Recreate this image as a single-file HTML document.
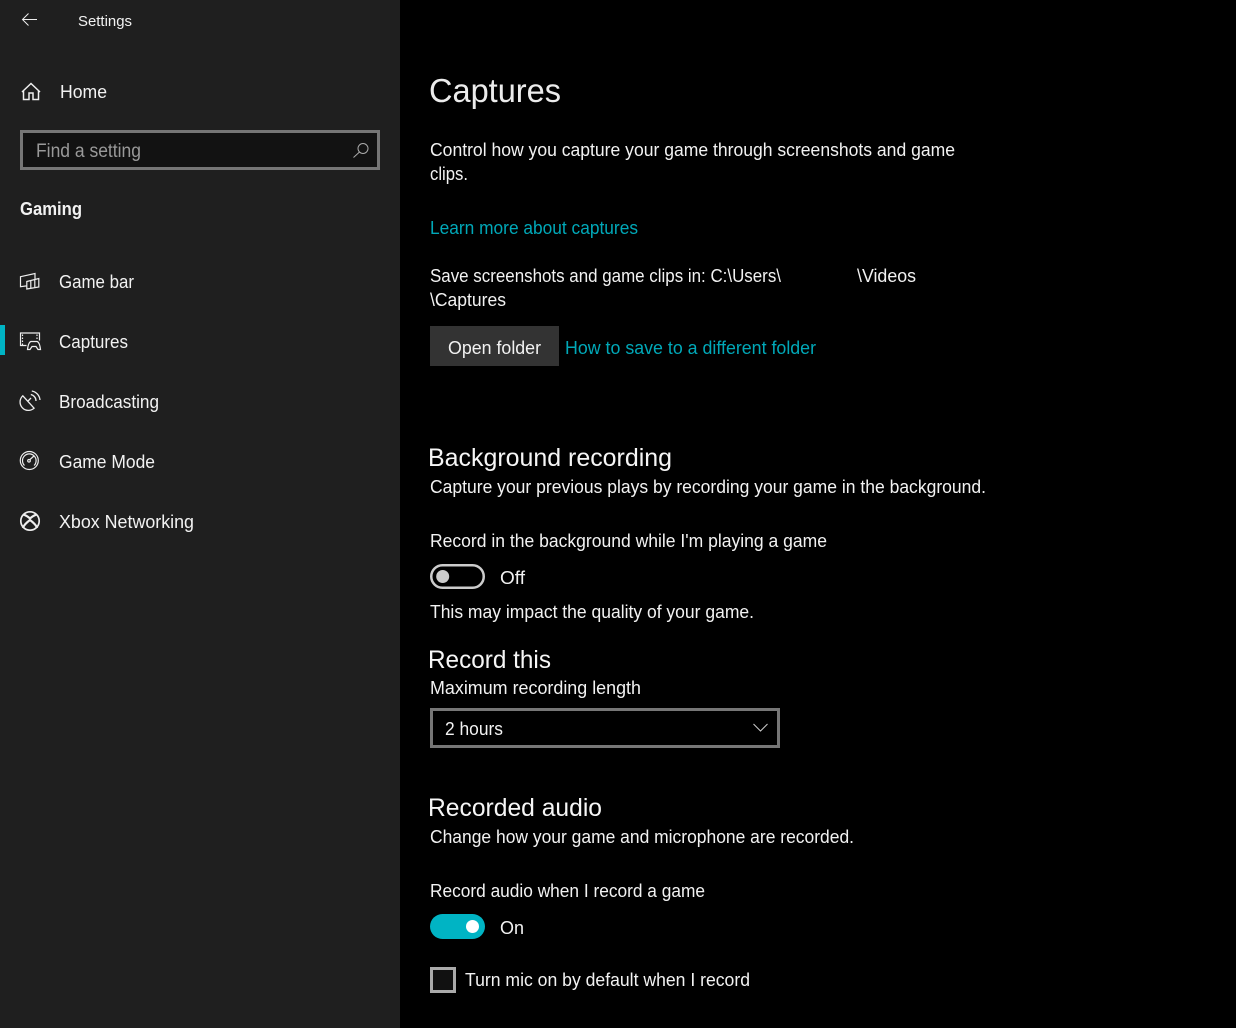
<!DOCTYPE html>
<html>
<head>
<meta charset="utf-8">
<title>Settings</title>
<style>
html,body{margin:0;padding:0;width:1236px;height:1028px;overflow:hidden;background:#000}
svg{display:block;position:absolute;left:0;top:0}
text{font-family:"Liberation Sans",sans-serif;font-size:18px;fill:#f2f2f2}
.l{fill:#00a8b8}
.h{font-size:25px;fill:#f6f6f6}
.i{fill:none;stroke:#eee;stroke-width:1.2}
</style>
</head>
<body>
<svg width="1236" height="1028" viewBox="0 0 1236 1028" xmlns="http://www.w3.org/2000/svg">
<rect x="0" y="0" width="400" height="1028" fill="#1f1f1f"/>
<path class="i" style="stroke-width:1" d="M37 19.500H22.500M28.500 13.500l-6 6 6 6"/>
<text x="78" y="26" textLength="54" lengthAdjust="spacingAndGlyphs" style="font-size:15px">Settings</text>
<path class="i" style="stroke-width:1.500" d="M22 92l9-8.500 9 8.500M23.500 90.500v9h5.500v-6.500h4v6.500h5.500v-9"/>
<text x="60" y="98" textLength="47" lengthAdjust="spacingAndGlyphs">Home</text>
<rect x="21.500" y="131.500" width="357" height="37" fill="#121212" stroke="#767676" stroke-width="3"/>
<text x="36" y="157" textLength="105" lengthAdjust="spacingAndGlyphs" style="fill:#999;font-size:19px">Find a setting</text>
<circle cx="363" cy="148.500" r="5" class="i" style="stroke:#aaa;stroke-width:1"/>
<path class="i" style="stroke:#aaa;stroke-width:1" d="M359.500 152l-6 5.500"/>
<text x="20" y="215" textLength="62" lengthAdjust="spacingAndGlyphs" style="font-weight:bold;font-size:18px">Gaming</text>
<rect x="0" y="325" width="5" height="30" fill="#00b4c4"/>
<path class="i" d="M35 279v-5.500l-14.500 3.200v10l6 -.8M26.800 281.500l12-3v8.500l-12 2zM30.800 280.500v8M34.800 279.500v8"/>
<text x="59" y="288" textLength="75" lengthAdjust="spacingAndGlyphs">Game bar</text>
<path class="i" d="M26.500 345.500h-6v-12.500h19v7.500M22.500 334.500v1.500m0 1.500v1.500m0 1.500v1.500m0 1.500v1.500M37 334.500v1.500m0 1.500v1.500"/>
<path class="i" d="M27.500 349.500c.5-4 1.500-7.500 3.500-8h6c2 .5 3 4 3.500 8h-2.500l-2-3h-4l-2 3z"/>
<text x="59" y="348" textLength="69" lengthAdjust="spacingAndGlyphs">Captures</text>
<path class="i" style="stroke-width:1.300" d="M22.800 395.800a8 8 0 0 0 11.300 12.400zM28 401l3-3M30.800 394.500a6.500 6.500 0 0 1 5.200 6.500M31.800 391a10 10 0 0 1 8.200 9"/>
<text x="59" y="408" textLength="100" lengthAdjust="spacingAndGlyphs">Broadcasting</text>
<circle cx="29.300" cy="460.500" r="9" class="i"/>
<path class="i" d="M24.500 465.500a6.800 6.800 0 1 1 9.600 0M30 459.500l4.500-4"/>
<circle cx="29" cy="460.800" r="1.300" class="i"/>
<text x="59" y="468" textLength="96" lengthAdjust="spacingAndGlyphs">Game Mode</text>
<circle cx="30" cy="521" r="9.200" class="i" style="stroke-width:1.700"/>
<path class="i" style="stroke-width:2.200" d="M23.500 514.500C26 515.500 28.500 517 30 518.500 31.500 517 34 515.500 36.500 514.500M30 520C26 523 23.500 526 22.800 528M30 520C34 523 36.500 526 37.200 528"/>
<text x="59" y="528" textLength="135" lengthAdjust="spacingAndGlyphs">Xbox Networking</text>

<text x="429" y="102" textLength="132" lengthAdjust="spacingAndGlyphs" style="font-size:33px;fill:#ececec">Captures</text>
<text x="430" y="156" textLength="525" lengthAdjust="spacingAndGlyphs">Control how you capture your game through screenshots and game</text>
<text x="430" y="180" textLength="38" lengthAdjust="spacingAndGlyphs">clips.</text>
<text class="l" x="430" y="234" textLength="208" lengthAdjust="spacingAndGlyphs">Learn more about captures</text>
<text x="430" y="282" textLength="351" lengthAdjust="spacingAndGlyphs">Save screenshots and game clips in: C:\Users\</text>
<text x="857" y="282" textLength="59" lengthAdjust="spacingAndGlyphs">\Videos</text>
<text x="430" y="306" textLength="76" lengthAdjust="spacingAndGlyphs">\Captures</text>
<rect x="430" y="326" width="129" height="40" fill="#333"/>
<text x="448" y="354" textLength="93" lengthAdjust="spacingAndGlyphs">Open folder</text>
<text class="l" x="565" y="354" textLength="251" lengthAdjust="spacingAndGlyphs">How to save to a different folder</text>
<text class="h" x="428" y="466" textLength="244" lengthAdjust="spacingAndGlyphs">Background recording</text>
<text x="430" y="493" textLength="556" lengthAdjust="spacingAndGlyphs">Capture your previous plays by recording your game in the background.</text>
<text x="430" y="547" textLength="397" lengthAdjust="spacingAndGlyphs">Record in the background while I'm playing a game</text>
<rect x="431.250" y="565.250" width="52.500" height="22.500" rx="11.250" fill="none" stroke="#ccc" stroke-width="2.500"/>
<circle cx="442.700" cy="576.500" r="6.500" fill="#ccc"/>
<text x="500" y="584" textLength="25" lengthAdjust="spacingAndGlyphs">Off</text>
<text x="430" y="618" textLength="324" lengthAdjust="spacingAndGlyphs">This may impact the quality of your game.</text>
<text class="h" x="428" y="668" textLength="123" lengthAdjust="spacingAndGlyphs">Record this</text>
<text x="430" y="694" textLength="211" lengthAdjust="spacingAndGlyphs">Maximum recording length</text>
<rect x="431.500" y="709.500" width="347" height="37" fill="#000" stroke="#767676" stroke-width="3"/>
<text x="445" y="735" textLength="58" lengthAdjust="spacingAndGlyphs">2 hours</text>
<path class="i" style="stroke:#ccc;stroke-width:1" d="M753.500 724l7 7 7-7"/>
<text class="h" x="428" y="816" textLength="174" lengthAdjust="spacingAndGlyphs">Recorded audio</text>
<text x="430" y="843" textLength="424" lengthAdjust="spacingAndGlyphs">Change how your game and microphone are recorded.</text>
<text x="430" y="897" textLength="275" lengthAdjust="spacingAndGlyphs">Record audio when I record a game</text>
<rect x="430" y="914" width="55" height="25" rx="12.500" fill="#00b4c4"/>
<circle cx="472.500" cy="926.500" r="6.500" fill="#fff"/>
<text x="500" y="934" textLength="24" lengthAdjust="spacingAndGlyphs">On</text>
<rect x="431.500" y="968.500" width="23" height="23" fill="#111" stroke="#aaa" stroke-width="3"/>
<text x="465" y="986" textLength="285" lengthAdjust="spacingAndGlyphs">Turn mic on by default when I record</text>
</svg>
</body>
</html>
